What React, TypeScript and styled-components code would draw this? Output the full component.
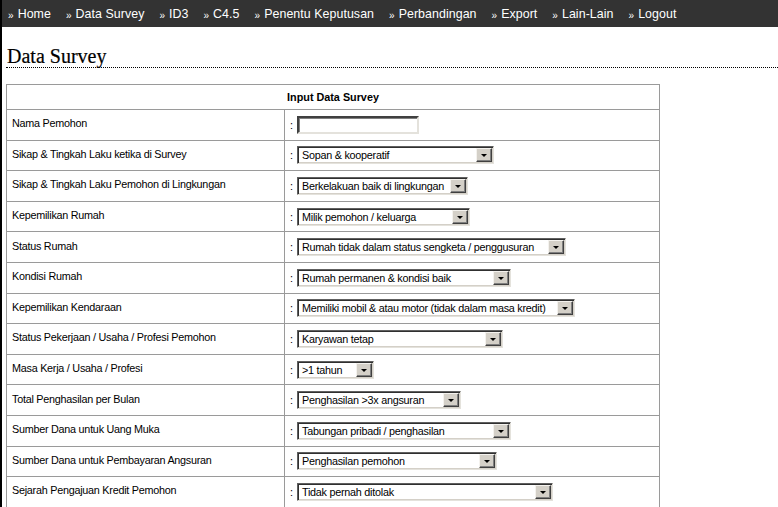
import styled, { createGlobalStyle } from "styled-components";

const GlobalStyle = createGlobalStyle`
    html, body {
        margin: 0;
        padding: 0;
        background: #fff;
    }
    body {
        border-left: 2px solid #000;
        min-height: 100vh;
        box-sizing: border-box;
    }
`;

const menu = [
    "Home",
    "Data Survey",
    "ID3",
    "C4.5",
    "Penentu Keputusan",
    "Perbandingan",
    "Export",
    "Lain-Lain",
    "Logout",
];

interface Field {
    label: string;
    value?: string;
    width?: number;
}

// width = pixel width of the dropdown, as in the original form
const fields: Field[] = [
    { label: "Nama Pemohon" },
    { label: "Sikap & Tingkah Laku ketika di Survey", value: "Sopan & kooperatif", width: 197 },
    { label: "Sikap & Tingkah Laku Pemohon di Lingkungan", value: "Berkelakuan baik di lingkungan", width: 171 },
    { label: "Kepemilikan Rumah", value: "Milik pemohon / keluarga", width: 173 },
    { label: "Status Rumah", value: "Rumah tidak dalam status sengketa / penggusuran", width: 269 },
    { label: "Kondisi Rumah", value: "Rumah permanen & kondisi baik", width: 214 },
    { label: "Kepemilikan Kendaraan", value: "Memiliki mobil & atau motor (tidak dalam masa kredit)", width: 278 },
    { label: "Status Pekerjaan / Usaha / Profesi Pemohon", value: "Karyawan tetap", width: 206 },
    { label: "Masa Kerja / Usaha / Profesi", value: ">1 tahun", width: 77 },
    { label: "Total Penghasilan per Bulan", value: "Penghasilan >3x angsuran", width: 164 },
    { label: "Sumber Dana untuk Uang Muka", value: "Tabungan pribadi / penghasilan", width: 214 },
    { label: "Sumber Dana untuk Pembayaran Angsuran", value: "Penghasilan pemohon", width: 200 },
    { label: "Sejarah Pengajuan Kredit Pemohon", value: "Tidak pernah ditolak", width: 256 },
];

const NavBar = styled.nav`
    display: flex;
    align-items: center;
    gap: 15px;
    height: 27px;
    padding-left: 6px;
    background: #333;
    font-family: "Liberation Sans", Arial, sans-serif;
    font-size: 12.4px;
    letter-spacing: 0.06px;
    color: #fff;
`;

const NavLink = styled.a`
    color: #fff;
    text-decoration: none;
    white-space: nowrap;
    cursor: pointer;

    &::before {
        content: "»";
        font-size: 10px;
        margin-right: 4px;
        position: relative;
        top: 1px;
    }
`;

const Content = styled.main`
    padding: 0 0 0 4px;
`;

const Title = styled.h1`
    margin: 18px 0 0;
    padding-left: 1px;
    font-family: "Liberation Serif", "Times New Roman", serif;
    font-size: 20px;
    font-weight: normal;
    line-height: 22px;
    color: #000;
    border-bottom: 1px dotted #000;
    -webkit-text-stroke: 0.2px #000;
`;

const FormTable = styled.table`
    margin-top: 16px;
    width: 654px;
    border-collapse: collapse;
    border: 1px solid #9a9a9a;
    font-family: "Liberation Sans", Tahoma, sans-serif;
    font-size: 10.8px;
    letter-spacing: -0.25px;
    color: #000;
`;

const HeadCell = styled.th`
    height: 24px;
    padding: 0;
    border: 1px solid #9a9a9a;
    font-weight: bold;
    letter-spacing: 0;
    text-align: center;
    vertical-align: middle;
`;

const LabelCell = styled.td`
    width: 272px;
    height: 26.6px;
    padding: 0 0 3px 5px;
    border: 1px solid #9a9a9a;
    vertical-align: middle;
    white-space: nowrap;
`;

const ControlCell = styled.td`
    padding: 0 0 0 5px;
    border: 1px solid #9a9a9a;
    vertical-align: middle;
    white-space: nowrap;
`;

const Colon = styled.span`
    display: inline-block;
    width: 7px;
    vertical-align: middle;
`;

const TextBox = styled.input`
    box-sizing: border-box;
    width: 122px;
    height: 18px;
    padding: 0 3px;
    vertical-align: middle;
    border-style: solid;
    border-width: 2px;
    border-color: #404040 #e4e2dc #e4e2dc #404040;
    box-shadow: inset 1px 1px 0 #808080;
    font: inherit;
    outline: none;
`;

const DropDown = styled.span`
    box-sizing: border-box;
    display: inline-flex;
    align-items: stretch;
    height: 18px;
    vertical-align: middle;
    border-style: solid;
    border-width: 1px;
    border-color: #606060 #e4e2dc #e4e2dc #606060;
    box-shadow: inset 1px 1px 0 #303030, inset -1px -1px 0 #d4d0c8;
    background: #fff;
    cursor: default;
`;

const DropText = styled.span`
    flex: 1;
    min-width: 0;
    overflow: hidden;
    padding: 0 2px 0 4px;
    line-height: 15px;
    margin-top: 1px;
`;

const DropButton = styled.span`
    box-sizing: border-box;
    width: 16px;
    flex: none;
    margin: 1px 1px 1px 0;
    display: flex;
    align-items: center;
    justify-content: center;
    background: #d4d0c8;
    border-style: solid;
    border-width: 1px;
    border-color: #f4f2ee #404040 #404040 #f4f2ee;
    box-shadow: inset -1px -1px 0 #808080;

    &::after {
        content: "";
        border-left: 3px solid transparent;
        border-right: 3px solid transparent;
        border-top: 3px solid #000;
        margin-top: 1px;
    }
`;

const Select = ({ value, width }: { value: string; width: number }) => (
    <DropDown role="combobox" style={{ width }}>
        <DropText>{value}</DropText>
        <DropButton />
    </DropDown>
);

export default function App() {
    return (
        <>
            <GlobalStyle />
            <NavBar>
                {menu.map((item) => (
                    <NavLink key={item}>{item}</NavLink>
                ))}
            </NavBar>
            <Content>
                <Title>Data Survey</Title>
                <FormTable>
                    <thead>
                        <tr>
                            <HeadCell colSpan={2}>Input Data Survey</HeadCell>
                        </tr>
                    </thead>
                    <tbody>
                        {fields.map((f) => (
                            <tr key={f.label}>
                                <LabelCell>{f.label}</LabelCell>
                                <ControlCell>
                                    <Colon>:</Colon>
                                    {f.value ? (
                                        <Select value={f.value} width={f.width || 150} />
                                    ) : (
                                        <TextBox type="text" />
                                    )}
                                </ControlCell>
                            </tr>
                        ))}
                    </tbody>
                </FormTable>
            </Content>
        </>
    );
}
